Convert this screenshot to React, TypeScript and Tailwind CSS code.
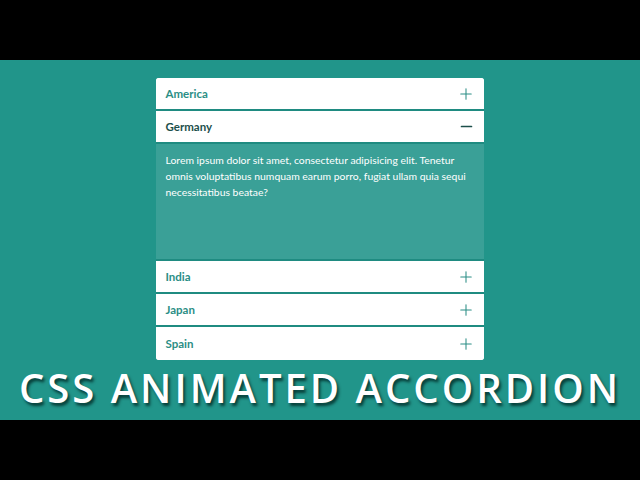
import { Plus, Minus } from "lucide-react";

const items = [
    { name: "America", open: false },
    { name: "Germany", open: true },
    { name: "India", open: false },
    { name: "Japan", open: false },
    { name: "Spain", open: false },
];

export default function App() {
    return (
        <div className="w-[640px] h-[480px] bg-black flex flex-col" style={{ fontFamily: "Lato, 'Open Sans', sans-serif" }}>
            <div className="h-[60px]" />
            <div className="h-[360px] bg-[#21958a] flex flex-col items-center pt-[18px]">
                <div className="w-[328px] ml-[-1px] rounded-[3px] overflow-hidden bg-white">
                    {items.map((item, i) => (
                        <div key={item.name}>
                            <div
                                className={`h-[33px] flex items-center justify-between pl-[10px] pr-[9px] bg-white ${i < items.length - 1 ? "border-b-2 border-[#1f8b81]" : ""}`}
                            >
                                <span className={`text-[11.5px] font-bold ${item.open ? "text-[#1d4f4b]" : "text-[#2b8e85]"}`}>
                                    {item.name}
                                </span>
                                {item.open ? (
                                    <Minus className="w-[17px] h-[17px] text-[#1d4f4b]" strokeWidth={2.4} />
                                ) : (
                                    <Plus className="w-[18px] h-[18px] text-[#2b8e85]" strokeWidth={1.4} />
                                )}
                            </div>
                            {item.open && (
                                <div className="h-[117px] bg-[#3aa097] px-[10px] pt-[8px] text-[10.4px] leading-[16px] text-white border-b-2 border-[#1f8b81]">
                                    Lorem ipsum dolor sit amet, consectetur adipisicing elit. Tenetur omnis voluptatibus numquam earum porro, fugiat ullam quia sequi necessitatibus beatae?
                                </div>
                            )}
                        </div>
                    ))}
                </div>
                <div
                    className="mt-[4px] text-white text-[40px] leading-[48px] tracking-[3px] font-semibold"
                    style={{ fontFamily: "'Open Sans', sans-serif", textShadow: "2px 3px 3px rgba(0,40,36,0.8)" }}
                >
                    CSS ANIMATED ACCORDION
                </div>
            </div>
            <div className="h-[60px]" />
        </div>
    );
}
